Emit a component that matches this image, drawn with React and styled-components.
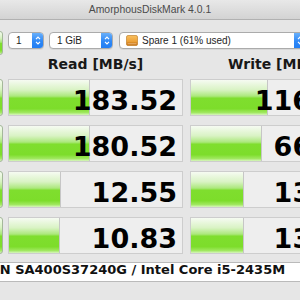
import React from "react";
import styled, { createGlobalStyle } from "styled-components";

const GlobalStyle = createGlobalStyle`
  body {
    margin: 0;
    background: #e6e6e6;
    font-family: "DejaVu Sans", sans-serif;
  }
`;

const Frame = styled.div`
  width: 300px;
  height: 300px;
  overflow: hidden;
  background: #e6e6e6;
`;

const TitleBar = styled.div`
  height: 19px;
  line-height: 19px;
  border-bottom: 1px solid #b1b1b1;
  background: linear-gradient(to bottom, #e8e8e8, #d3d3d3);
  text-align: center;
  font-family: "Liberation Sans", Arial, sans-serif;
  font-size: 10.4px;
  color: #4b4b4b;
`;

const Body = styled.div`
  width: 460px;
  margin-left: -80px;
  padding: 11px 15px 0 10px;
  box-sizing: border-box;
`;

const Top = styled.div`
  display: flex;
`;

const GreenButton = styled.div`
  width: 73px;
  height: ${(p) => p.h}px;
  margin-right: 5px;
  box-sizing: border-box;
  border: 1px solid #a4b89a;
  border-radius: 3px;
  background: linear-gradient(
    to bottom,
    #f5fbf0 0%,
    #d6f2bf 28%,
    #a8e777 46%,
    #7fde2e 52%,
    #7ddd2b 82%,
    #a2e862 93%,
    #d6f4bc 100%
  );
`;

const RightSide = styled.div`
  width: 357px;
  display: flex;
  flex-direction: column;
`;

const Toolbar = styled.div`
  display: flex;
  margin-top: 1px;
  height: 17px;
`;

const Popup = styled.div`
  width: ${(p) => p.w}px;
  margin-left: ${(p) => p.ml || 0}px;
  height: 17px;
  box-sizing: border-box;
  border: 1px solid #ababab;
  border-radius: 4px;
  background: #fff;
  display: flex;
  align-items: center;
  padding-left: ${(p) => p.pl || 7}px;
  font-family: "Liberation Sans", Arial, sans-serif;
  font-size: 10px;
  color: #1e1e1e;
  overflow: hidden;
  box-shadow: 0 1px 0 rgba(0, 0, 0, 0.06);
`;

const PopupLabel = styled.span`
  flex: 1;
  white-space: nowrap;
`;

const Stepper = styled.div`
  width: 12px;
  height: 17px;
  margin-top: -1px;
  margin-bottom: -1px;
  margin-right: -1px;
  border-radius: 0 4px 4px 0;
  background: linear-gradient(to bottom, #6fb4fb, #2f88f6 55%, #1f7cf3);
  display: flex;
  align-items: center;
  justify-content: center;
`;

const DriveIcon = styled.svg`
  width: 12px;
  height: 11px;
  margin-right: 4px;
  flex: none;
`;

const Headers = styled.div`
  display: flex;
  height: 30px;
`;

const Header = styled.div`
  width: 175px;
  margin-left: ${(p) => p.ml || 0}px;
  text-align: center;
  font-size: 14px;
  font-weight: bold;
  line-height: 30px;
  color: #181818;
  white-space: nowrap;
`;

const Rows = styled.div`
  display: flex;
  flex-direction: column;
  gap: 9px;
`;

const Row = styled.div`
  display: flex;
  height: 37px;
`;

const Cell = styled.div`
  position: relative;
  width: 175px;
  height: 37px;
  margin-left: ${(p) => p.ml || 0}px;
  box-sizing: border-box;
  border: 1px solid #cdcdcd;
  background: #eeeeee;
  overflow: hidden;
`;

const Bar = styled.div`
  position: absolute;
  left: 0;
  top: 0;
  bottom: 0;
  box-sizing: border-box;
  border-right: 1px solid #c6c6c6;
  background: linear-gradient(
    to bottom,
    #f6fbf2 0%,
    #d9f3c4 28%,
    #ace87c 46%,
    #7fde2e 52%,
    #7ddd2b 82%,
    #a0e85f 93%,
    #d8f5bf 100%
  );
`;

const Value = styled.div`
  position: relative;
  padding: 5px 5px 0 0;
  text-align: right;
  font-size: 27px;
  font-weight: bold;
  line-height: 31px;
  color: #000;
  white-space: nowrap;
`;

const Footer = styled.div`
  margin-top: 8px;
  height: 20px;
  box-sizing: border-box;
  border: 1px solid #bababa;
  background: #fff;
  padding: 0 0 4px 3px;
  font-size: 13px;
  font-weight: bold;
  line-height: 14px;
  color: #111;
  white-space: nowrap;
`;

const results = [
  { read: "183.52", readBar: 81, write: "116.42", writeBar: 77 },
  { read: "180.52", readBar: 81, write: "66.17", writeBar: 71 },
  { read: "12.55", readBar: 52, write: "13.08", writeBar: 53 },
  { read: "10.83", readBar: 51, write: "13.21", writeBar: 53 },
];

const Arrows = () => (
  <svg width="6" height="11" viewBox="0 0 6 11">
    <path
      d="M1 4.2 L3 2.2 L5 4.2 M1 6.8 L3 8.8 L5 6.8"
      fill="none"
      stroke="#fff"
      strokeWidth="1.2"
    />
  </svg>
);

const App = () => {
  return (
    <Frame>
      <GlobalStyle />
      <TitleBar>AmorphousDiskMark 4.0.1</TitleBar>
      <Body>
        <Top>
          <GreenButton h={24} />
          <RightSide>
            <Toolbar>
              <Popup w={36}>
                <PopupLabel>1</PopupLabel>
                <Stepper>
                  <Arrows />
                </Stepper>
              </Popup>
              <Popup w={64} ml={5}>
                <PopupLabel>1 GiB</PopupLabel>
                <Stepper>
                  <Arrows />
                </Stepper>
              </Popup>
              <Popup w={187} ml={6} pl={6}>
                <DriveIcon viewBox="0 0 12 11">
                  <defs>
                    <linearGradient id="drv" x1="0" y1="0" x2="0" y2="1">
                      <stop offset="0" stopColor="#f9c060" />
                      <stop offset="1" stopColor="#e48d1c" />
                    </linearGradient>
                  </defs>
                  <rect x="0.5" y="0.5" width="11" height="10" rx="1.5" fill="url(#drv)" stroke="#b8741a" strokeWidth="0.6" />
                  <rect x="0.8" y="7.6" width="10.4" height="2.6" fill="#c9761a" />
                  <rect x="1.5" y="8.4" width="9" height="0.8" fill="#f3c58a" />
                </DriveIcon>
                <PopupLabel>Spare 1 (61% used)</PopupLabel>
                <Stepper>
                  <Arrows />
                </Stepper>
              </Popup>
            </Toolbar>
            <Headers>
              <Header>Read [MB/s]</Header>
              <Header ml={7}>Write [MB/s]</Header>
            </Headers>
          </RightSide>
        </Top>
        <Rows>
          {results.map((r, i) => (
            <Row key={i}>
              <GreenButton h={37} />
              <Cell>
                <Bar style={{ width: r.readBar }} />
                <Value>{r.read}</Value>
              </Cell>
              <Cell ml={7}>
                <Bar style={{ width: r.writeBar }} />
                <Value>{r.write}</Value>
              </Cell>
            </Row>
          ))}
        </Rows>
        <Footer>KINGSTON SA400S37240G / Intel Core i5-2435M</Footer>
      </Body>
    </Frame>
  );
};

export default App;
